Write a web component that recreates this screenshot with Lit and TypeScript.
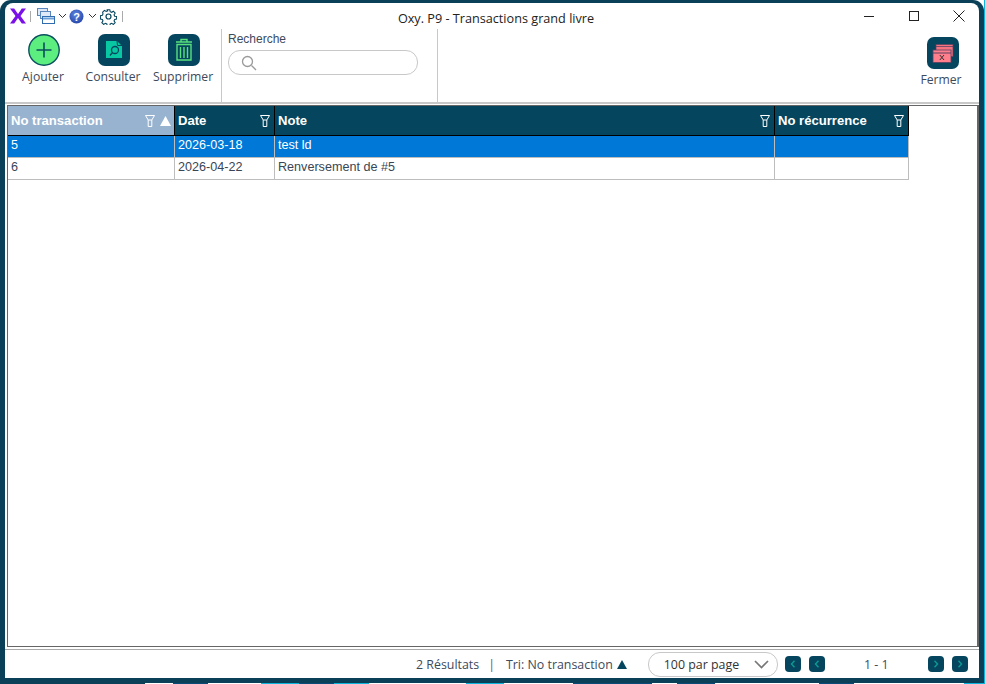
import { LitElement, html, css, svg } from "lit";
import { customElement } from "lit/decorators.js";

const funnel = svg`<svg class="funnel" width="10" height="12" viewBox="0 0 10 12" fill="none" stroke="#fff" stroke-width="1"><path d="M.5 .5H9.500L6.800 5V11.500H3.200V5Z"/><path d="M3.200 5H6.800"/></svg>`;
const chevL = svg`<svg width="6" height="8" viewBox="0 0 6 8" fill="none" stroke="#0a9a94" stroke-width="1.4"><path d="M4.5 .8L1.5 4L4.5 7.2"/></svg>`;
const chevR = svg`<svg width="6" height="8" viewBox="0 0 6 8" fill="none" stroke="#0a9a94" stroke-width="1.4"><path d="M1.5 .8L4.5 4L1.5 7.2"/></svg>`;
const tiny = svg`<svg width="9" height="6" viewBox="0 0 9 6" fill="none" stroke="#333" stroke-width="1"><path d="M1 1L4.5 4.5L8 1"/></svg>`;

@customElement("app-root")
export class AppRoot extends LitElement {
  static styles = css`
    :host { display: block; width: 985px; height: 684px; background: linear-gradient(90deg, #fff 984px, #0db4dc 984px); overflow: hidden; font-family: "Open Sans", "Noto Sans", sans-serif; }
    .frame { width: 984px; height: 683px; box-sizing: border-box; padding: 3px 5px 0; background: #0a4058; border-radius: 11px 11px 0 0; }
    .strip { height: 1px; background: linear-gradient(90deg, #0a4058 145px, #fff 145px 173px, #0a4a78 173px 208px, #fff 208px 261px, #0db4dc 261px 299px, #0a4a78 299px 334px, #0db4dc 334px 369px, #fff 369px 466px, #0db4dc 466px 504px, #fff 504px 573px, #0a4a78 573px 652px, #fff 652px 677px, #0a4a78 677px 715px, #fff 715px 819px, #0a4a78 819px 854px, #fff 854px 964px, #0db4dc 964px); }
    .window { height: 675px; background: #fff; border-radius: 8px 8px 0 0; display: flex; flex-direction: column; box-sizing: border-box; }
    .title { height: 26px; flex: none; display: grid; grid-template-columns: 1fr auto 1fr; align-items: center; }
    .qa { display: flex; align-items: center; padding-left: 4px; height: 26px; }
    .sep { width: 1px; height: 11px; background: #aaa; }
    .t { font-size: 12.67px; color: #222; padding-left: 8px; padding-top: 4px; white-space: nowrap; }
    .ctl { display: flex; justify-content: flex-end; align-items: center; margin-right: -2px; }
    .ctl span { width: 45px; display: flex; justify-content: center; }
    .tools { height: 73px; flex: none; display: flex; border-bottom: 2px solid #c8c8c8; }
    .btns { display: flex; width: 217px; flex: none; border-right: 1px solid #c8c8c8; padding-left: 4px; box-sizing: border-box; }
    .btn { width: 70px; display: flex; flex-direction: column; align-items: center; padding-top: 5px; font-size: 12.2px; color: #3d4a5c; white-space: nowrap; }
    .btn svg { display: block; margin-bottom: 2px; }
    .btn span { line-height: 17px; margin-left: -2px; }
    .search { width: 216px; flex: none; border-right: 1px solid #c8c8c8; padding: 1px 0 0 6px; box-sizing: border-box; }
    .search label { display: block; font: 12px/16px "Liberation Sans", sans-serif; color: #3d4a5c; margin-top: 1px; }
    .input { width: 190px; height: 25px; box-sizing: border-box; margin-top: 3px; border: 1px solid #c8c8c8; border-radius: 12px; display: flex; align-items: center; padding-left: 12px; }
    .tools .grow { flex: 1; }
    .close { width: 76px; flex: none; display: flex; flex-direction: column; align-items: center; padding-top: 8px; font-size: 12.2px; color: #3d4a5c; box-sizing: border-box; }
    .close svg { margin: 0 0 2px 3px; display: block; }
    .body { height: 542px; flex: none; margin: 1px 0 0 2px; box-sizing: border-box; border: 1px solid #666; width: 972px; border-right-width: 2px; }
    .grid { display: grid; grid-template-columns: 167px 100px 500px 134px; width: 901px; font: 12.6px "Liberation Sans", sans-serif; }
    .h { height: 30px; box-sizing: border-box; background: #05465e; color: #fff; font: bold 13.1px "Liberation Sans", sans-serif; display: flex; align-items: center; padding: 0 4px 0 3px; border-right: 1px solid #000; border-bottom: 1px solid #000; gap: 5px; }
    .h.sorted { background: #98b3d0; padding-right: 3px; }
    .h b { flex: 1; font-weight: bold; white-space: nowrap; }
    .h svg { flex: none; }
    .c { height: 22px; box-sizing: border-box; padding: 0 3px; line-height: 19px; color: #3a4555; border-right: 1px solid #bdbdbd; border-bottom: 1px solid #bdbdbd; white-space: nowrap; }
    .sel { background: #0078d7; color: #fff; }
    .foot { flex: 1; display: flex; align-items: center; font-size: 12.4px; color: #3d4a5c; margin-top: 2px; border-top: 1px solid #aaa; padding-left: 411px; white-space: nowrap; }
    .foot .bar { margin: 0 11px 0 9px; color: #5a4a8a; }
    .tri { display: inline-block; width: 0; height: 0; border: 5.5px solid transparent; border-top: 0; border-bottom: 9px solid #05465e; margin-left: 4px; }
    .select { width: 130px; height: 25px; box-sizing: border-box; margin-left: 21px; border: 1px solid #c8c8c8; border-radius: 12px; display: flex; align-items: center; justify-content: space-between; padding: 0 8px 0 15px; color: #333; }
    .pg { width: 16px; height: 16px; background: #05465e; border-radius: 4px; display: flex; align-items: center; justify-content: center; margin-left: 8px; flex: none; }
    .pg.first { margin-left: 7px; }
    .count { width: 103px; text-align: center; }
  `;

  render() {
    return html`
      <div class="frame"><div class="window">
        <div class="title">
          <div class="qa">
            <svg width="18" height="18" viewBox="0 0 18 18" style="margin-right:3px"><path d="M1 1.500H5.200L9 7L12.800 1.500H17L11.500 9L17 16.500H12.800L9 11L5.200 16.500H1L6.500 9Z" fill="#7a10e8"/></svg>
            <i class="sep"></i>
            <svg width="19" height="16" viewBox="0 0 19 16" style="margin-left:6px" fill="#dfe9f7" stroke="#5b86bd"><rect x=".5" y=".5" width="10" height="7"/><rect x="3.500" y="3.500" width="10" height="7"/><rect x="5.500" y="8.500" width="12" height="7" fill="#fff" stroke="#2f6db0"/><path d="M6 10.500H17" stroke="#6a9fd8" stroke-width="2"/></svg>
            <span style="margin:0 2px 0 2px;display:flex">${tiny}</span>
            <svg width="15" height="15" viewBox="0 0 15 15"><defs><radialGradient id="hb" cx=".45" cy=".35" r=".7"><stop offset="0" stop-color="#5f86e0"/><stop offset="1" stop-color="#2443a8"/></radialGradient></defs><circle cx="7.500" cy="7.500" r="7" fill="url(#hb)"/><text x="7.500" y="11.500" text-anchor="middle" font-size="11" font-weight="700" font-family="Liberation Sans" fill="#fff">?</text></svg>
            <span style="margin:0 3px 0 4px;display:flex">${tiny}</span>
            <svg width="17" height="17" viewBox="0 0 24 24" fill="none" stroke="#05465e" stroke-width="1.700"><circle cx="12" cy="12" r="3.500"/><path d="M10 1.500h4l.6 3 2.300 1 2.600-1.700 2.800 2.800-1.700 2.600 1 2.300 3 .6v3.800l-3 .6-1 2.300 1.700 2.600-2.800 2.800-2.600-1.700-2.300 1-.6 3h-4l-.6-3-2.300-1-2.600 1.700-2.800-2.800 1.700-2.600-1-2.300-3-.6V10.800l3-.6 1-2.300L2.900 5.300l2.800-2.800 2.600 1.700 2.300-1Z" transform="translate(1.100 1.100) scale(.91)"/></svg>
            <i class="sep" style="margin-left:5px"></i>
          </div>
          <div class="t">Oxy. P9 - Transactions grand livre</div>
          <div class="ctl">
            <span><svg width="10" height="10" viewBox="0 0 10 10"><path d="M0 5.500H10" stroke="#222"/></svg></span>
            <span><svg width="10" height="10" viewBox="0 0 10 10" fill="none"><rect x=".5" y=".5" width="9" height="9" stroke="#222"/></svg></span>
            <span><svg width="12" height="12" viewBox="0 0 12 12"><path d="M.5 .5L11.500 11.500M11.500 .5L.5 11.500" stroke="#222"/></svg></span>
          </div>
        </div>
        <div class="tools">
          <div class="btns">
            <div class="btn">
              <svg width="32" height="32" viewBox="0 0 32 32"><circle cx="16" cy="16" r="15.200" fill="#5cee7e" stroke="#0b4f5f" stroke-width="1.400"/><path d="M16 8.500V23.500M8.500 16H23.500" stroke="#0b4f5f" stroke-width="1.600"/></svg>
              <span>Ajouter</span>
            </div>
            <div class="btn">
              <svg width="32" height="32" viewBox="0 0 32 32"><rect width="32" height="32" rx="7" fill="#05465e"/><path d="M8 7H19L24 12V24H8Z" fill="#08c8a4"/><path d="M19 7L19.500 11.500H24" fill="none" stroke="#05465e"/><circle cx="17" cy="16" r="3.500" fill="none" stroke="#05465e" stroke-width="1.300"/><path d="M14.500 18.500L12 21.500" stroke="#05465e" stroke-width="1.300"/></svg>
              <span>Consulter</span>
            </div>
            <div class="btn">
              <svg width="32" height="32" viewBox="0 0 32 32"><rect width="32" height="32" rx="7" fill="#05465e"/><g fill="none" stroke="#57e07c" stroke-width="1.400"><path d="M8 8H24M13 8V5.500H19V8"/><path d="M9 10.500H23V26H9Z"/><path d="M12.500 13V24M16 13V24M19.500 13V24"/></g></svg>
              <span>Supprimer</span>
            </div>
          </div>
          <div class="search">
            <label>Recherche</label>
            <div class="input"><svg width="16" height="16" viewBox="0 0 16 16" fill="none" stroke="#9a9a9a" stroke-width="1.300"><circle cx="6.500" cy="6.500" r="5"/><path d="M10.500 10.500L15 15"/></svg></div>
          </div>
          <div class="grow"></div>
          <div class="close">
            <svg width="32" height="32" viewBox="0 0 32 32"><rect width="32" height="32" rx="7" fill="#05465e"/><rect x="9" y="7.500" width="17" height="12" fill="#f5727f" stroke="#5a4060" stroke-width=".7"/><path d="M9 9.500H26" stroke="#5a4060" stroke-width=".8"/><rect x="6" y="13" width="18" height="12.500" fill="#ff7f8c" stroke="#5a4060" stroke-width=".8"/><path d="M6 16H24" stroke="#5a4060"/><path d="M12.800 18L17 23M17 18L12.800 23" stroke="#333"/></svg>
            <span>Fermer</span>
          </div>
        </div>
        <div class="body">
          <div class="grid">
            <div class="h sorted"><b>No transaction</b>${funnel}<svg width="11" height="10" viewBox="0 0 11 10"><path d="M5.500 0L11 10H0Z" fill="#fff"/></svg></div>
            <div class="h"><b>Date</b>${funnel}</div>
            <div class="h"><b>Note</b>${funnel}</div>
            <div class="h"><b>No récurrence</b>${funnel}</div>
            <div class="c sel">5</div><div class="c sel">2026-03-18</div><div class="c sel">test ld</div><div class="c sel"></div>
            <div class="c">6</div><div class="c">2026-04-22</div><div class="c">Renversement de #5</div><div class="c"></div>
          </div>
        </div>
        <div class="foot">
          <span>2 Résultats</span><span class="bar">|</span><span>Tri: No transaction</span><i class="tri"></i>
          <div class="select"><span>100 par page</span><svg width="15" height="9" viewBox="0 0 15 9" fill="none" stroke="#777" stroke-width="1.700"><path d="M1 1L7.500 7.500L14 1"/></svg></div>
          <div class="pg first">${chevL}</div><div class="pg">${chevL}</div>
          <div class="count">1 - 1</div>
          <div class="pg" style="margin-left:0">${chevR}</div><div class="pg">${chevR}</div>
        </div>
      </div></div>
      <div class="strip"></div>
    `;
  }
}
